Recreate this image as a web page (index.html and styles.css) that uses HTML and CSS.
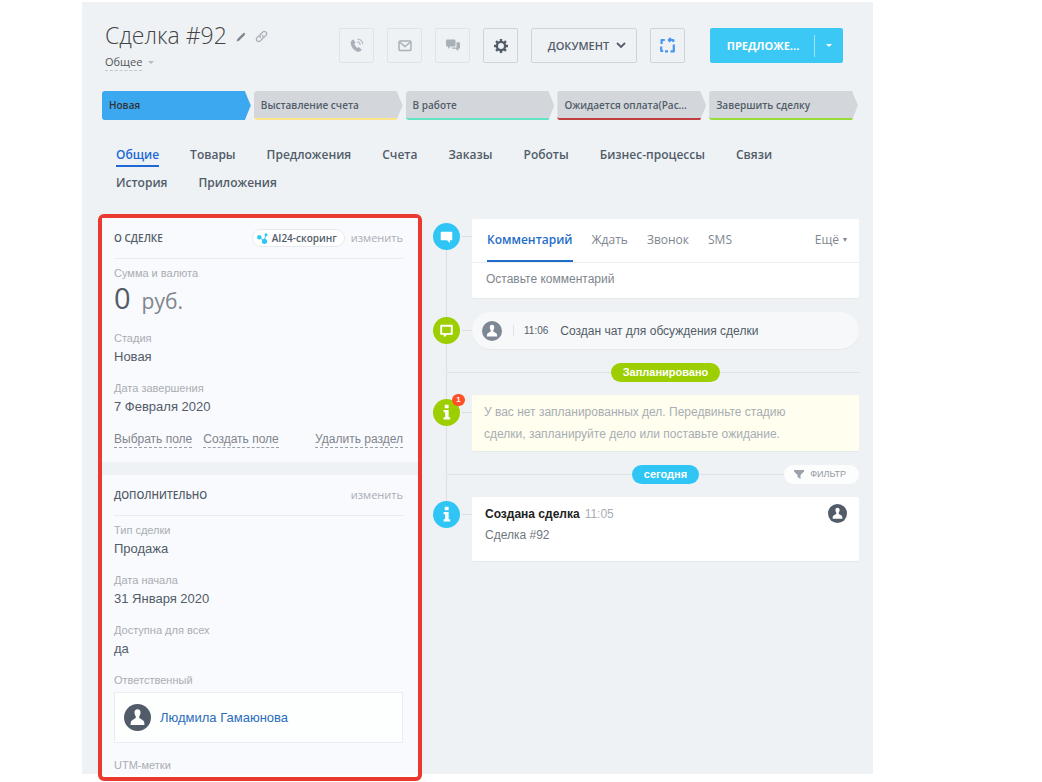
FILE: index.html
```html
<!DOCTYPE html>
<html lang="ru">
<head>
<meta charset="utf-8">
<meta name="viewport" content="width=device-width, initial-scale=1">
<title>Сделка #92</title>
<link rel="stylesheet" href="styles.css">
</head>
<body>
<svg class="defs" aria-hidden="true">
  <symbol id="user" viewBox="0 0 26 26">
    <circle cx="13" cy="13" r="13" fill="currentColor"/>
    <path fill="#fff" d="M13 5c-2 0-3 1.400-2.900 3.300 0 1.500.5 2.700 1.200 3.500v1.800l-2.700 1.600c-1.500.8-2 1.600-2.100 2.700l-.2 2.300h13.400l-.2-2.300c-.1-1.100-.6-1.900-2.100-2.700l-2.700-1.600v-1.800c.7-.8 1.200-2 1.200-3.500C16 6.400 15 5 13 5z"/>
  </symbol>
  <symbol id="info" viewBox="0 0 28 28">
    <path fill="#fff" d="M12.200 6h4v3.500h-4zM11 11.300h5.200v7.500h1.600v2.500H11v-2.500h1.600v-5H11z"/>
  </symbol>
</svg>
<div class="app">
  <header class="header">
    <div class="heading">
      <div class="title-row">
        <h1 class="title">Сделка #92</h1>
        <svg class="pencil" viewBox="0 0 10 10" aria-hidden="true"><path fill="#7f8790" d="M.5 9.500l.8-2.500L6.800 1.500 8.500.8l.7.7-.7 1.700L3 8.700z"/></svg>
        <svg class="chain" viewBox="0 0 14 14" fill="none" stroke="#a9b0b8" stroke-width="1.400" stroke-linecap="round" aria-hidden="true"><path d="M6 8.200a2.600 2.600 0 0 1 0-3.600l2.300-2.300a2.400 2.400 0 0 1 3.500 3.500L10 7.600M8 5.800a2.600 2.600 0 0 1 0 3.600l-2.300 2.300a2.400 2.400 0 0 1-3.500-3.500L4 6.400"/></svg>
      </div>
      <button class="category" type="button"><span class="category-name">Общее</span><span class="caret"></span></button>
    </div>
    <div class="tools">
      <button class="tool faint" type="button" aria-label="Позвонить"><svg viewBox="0 0 16 16" width="16" height="16"><path fill="#a9b0b8" d="M3 2.200l1.500-.7 2 3.200-1.200 1.100c.5 1.600 1.600 3.100 3.100 4.100l1.400-.9 2.800 2.500-.9 1.600c-1 1-2.900 1-4.500.1-3-1.600-5-4.400-5.400-7.500-.2-1.500.1-2.800 1.200-3.500z"/><path fill="none" stroke="#b9c0c7" stroke-width="1.200" d="M8.200 3.800c1.700.1 2.900 1.300 3.100 3.100M8.600 1.200c2.900.2 4.900 2.200 5.200 5.200"/></svg></button>
      <button class="tool faint" type="button" aria-label="Письмо"><svg viewBox="0 0 14 12" width="14" height="12" fill="none" stroke="#a9b0b8" stroke-width="1.500"><rect x="1" y="1" width="12" height="9.500" rx="1.200"/><path d="M1.500 2l5.500 4.500L12.500 2"/></svg></button>
      <button class="tool faint" type="button" aria-label="Чат"><svg viewBox="0 0 14 13" width="14" height="13" fill="#a9b0b8"><path d="M1 .5h7.500a1 1 0 0 1 1 1v5a1 1 0 0 1-1 1H4.500L2.200 10V7.500H1a1 1 0 0 1-1-1v-5a1 1 0 0 1 1-1z"/><path d="M10.500 3.200H13a1 1 0 0 1 1 1v4.600a1 1 0 0 1-1 1h-.8v2.400l-2.500-2.400H6.500a1 1 0 0 1-.9-1.200h4.900z"/></svg></button>
      <button class="tool" type="button" aria-label="Настройки"><svg viewBox="0 0 14 14" width="14" height="14"><circle cx="7" cy="7" r="4.100" fill="none" stroke="#525c69" stroke-width="2.300"/><path stroke="#525c69" stroke-width="2.400" d="M7 0v2.500M7 11.500V14M0 7h2.500M11.500 7H14M2.050 2.050L3.800 3.800M10.200 10.200l1.750 1.750M2.050 11.950L3.800 10.200M10.200 3.800l1.750-1.750"/></svg></button>
      <button class="tool document" type="button">ДОКУМЕНТ<svg viewBox="0 0 10 7" width="10" height="7" fill="none" stroke="#525c69" stroke-width="1.800"><path d="M1 1l4 4 4-4"/></svg></button>
      <button class="tool" type="button" aria-label="Приложение"><svg viewBox="0 0 17 17" width="17" height="17" fill="none" stroke="#4a96f0" stroke-width="2.200" stroke-linejoin="round"><path d="M5.800 3H2.600v4M2.200 9.500v4.500h2M6 14.400h3M9.800 3h4.500v2M11.800 1L9.800 3l1.600 1.800M11.500 14.400h3.300V7.500"/></svg></button>
      <div class="offer">
        <button class="offer-main" type="button">ПРЕДЛОЖЕ...</button>
        <button class="offer-more" type="button" aria-label="Ещё"><span class="caret"></span></button>
      </div>
    </div>
  </header>

  <div class="stages">
    <button class="stage current" type="button">Новая</button>
    <button class="stage yellow" type="button">Выставление счета</button>
    <button class="stage teal" type="button">В работе</button>
    <button class="stage red" type="button">Ожидается оплата(Рас...</button>
    <button class="stage green" type="button">Завершить сделку</button>
  </div>

  <nav class="tabs">
    <a class="tab active" href="#">Общие</a>
    <a class="tab" href="#">Товары</a>
    <a class="tab" href="#">Предложения</a>
    <a class="tab" href="#">Счета</a>
    <a class="tab" href="#">Заказы</a>
    <a class="tab" href="#">Роботы</a>
    <a class="tab" href="#">Бизнес-процессы</a>
    <a class="tab" href="#">Связи</a>
    <a class="tab" href="#">История</a>
    <a class="tab" href="#">Приложения</a>
  </nav>

  <main class="columns">
    <div class="details">
      <section class="section">
        <div class="section-head">
          <h2 class="section-title">О СДЕЛКЕ</h2>
          <button class="scoring" type="button"><svg viewBox="0 0 11 11" width="11" height="11" fill="#2fc6f6"><path stroke="#2fc6f6" d="M2.500 4.500l5 4M7 8l2-6"/><circle cx="2.300" cy="4.200" r="2.200"/><circle cx="7.500" cy="8.300" r="2.600"/><circle cx="9" cy="1.700" r="1.500"/></svg>AI24-скоринг</button>
          <button class="edit" type="button">изменить</button>
        </div>
        <dl class="fields">
          <div class="field sum"><dt>Сумма и валюта</dt><dd><span class="amount">0</span><span class="currency">руб.</span></dd></div>
          <div class="field"><dt>Стадия</dt><dd>Новая</dd></div>
          <div class="field"><dt>Дата завершения</dt><dd>7 Февраля 2020</dd></div>
        </dl>
        <div class="actions">
          <a class="action" href="#">Выбрать поле</a>
          <a class="action" href="#">Создать поле</a>
          <a class="action last" href="#">Удалить раздел</a>
        </div>
      </section>
      <section class="section">
        <div class="section-head">
          <h2 class="section-title">ДОПОЛНИТЕЛЬНО</h2>
          <button class="edit" type="button">изменить</button>
        </div>
        <dl class="fields">
          <div class="field"><dt>Тип сделки</dt><dd>Продажа</dd></div>
          <div class="field"><dt>Дата начала</dt><dd>31 Января 2020</dd></div>
          <div class="field"><dt>Доступна для всех</dt><dd>да</dd></div>
          <div class="field person"><dt>Ответственный</dt><dd><svg class="avatar" aria-hidden="true"><use href="#user"/></svg><a href="#">Людмила Гамаюнова</a></dd></div>
          <div class="field"><dt>UTM-метки</dt></div>
        </dl>
      </section>
    </div>

    <div class="timeline">
      <div class="event">
        <span class="dot blue"><svg viewBox="0 0 28 28"><path fill="#fff" d="M9 9h10a1 1 0 0 1 1 1v7a1 1 0 0 1-1 1h-1.500v2.800L14.500 18H9a1 1 0 0 1-1-1v-7a1 1 0 0 1 1-1z"/></svg></span>
        <div class="card composer">
          <div class="modes">
            <button class="mode active" type="button">Комментарий</button>
            <button class="mode" type="button">Ждать</button>
            <button class="mode" type="button">Звонок</button>
            <button class="mode" type="button">SMS</button>
            <button class="mode more" type="button">Ещё<span class="caret"></span></button>
          </div>
          <input class="comment" type="text" placeholder="Оставьте комментарий" aria-label="Комментарий">
        </div>
      </div>
      <div class="event">
        <span class="dot lime middle"><svg viewBox="0 0 28 28"><path fill="none" stroke="#fff" stroke-width="2" stroke-linejoin="round" d="M8.500 9h11v8.500H14l-2 2v-2H8.500z"/></svg></span>
        <div class="log">
          <svg class="log-avatar" aria-hidden="true"><use href="#user"/></svg>
          <time class="log-time">11:06</time>
          <span>Создан чат для обсуждения сделки</span>
        </div>
      </div>
      <div class="divider"><span class="pill lime">Запланировано</span></div>
      <div class="event">
        <span class="dot lime"><svg><use href="#info"/></svg><span class="badge">1</span></span>
        <p class="card notice">У вас нет запланированных дел. Передвиньте стадию сделки, запланируйте дело или поставьте ожидание.</p>
      </div>
      <div class="divider"><span class="pill blue">сегодня</span><button class="filter" type="button"><svg viewBox="0 0 10 9" width="10" height="9" fill="#9aa2ac"><path d="M0 0h10v1.500L6.500 5v4L3.500 7V5L0 1.500z"/></svg>ФИЛЬТР</button></div>
      <div class="event">
        <span class="dot blue"><svg><use href="#info"/></svg></span>
        <article class="card created">
          <div><strong>Создана сделка</strong><time>11:05</time><p>Сделка #92</p></div>
          <svg class="log-avatar dark" aria-hidden="true"><use href="#user"/></svg>
        </article>
      </div>
    </div>
  </main>
</div>
</body>
</html>
```
FILE: styles.css
```css
* {
  box-sizing: border-box;
}

body {
  margin: 0;
  padding: 2px 169px 8px 82px;
  background: #fff;
  color: #525c69;
  font-family: "Liberation Sans", Arial, sans-serif;
  font-size: 13px;
}

button {
  margin: 0;
  padding: 0;
  border: 0;
  background: none;
  color: inherit;
  font: inherit;
  cursor: pointer;
}

a {
  color: inherit;
  text-decoration: none;
}

h1, h2, p, dl, dd {
  margin: 0;
}

svg {
  display: block;
}

.defs {
  position: absolute;
  width: 0;
  height: 0;
}

.app {
  padding: 21px 14px 0 16px;
  background: #eef2f5;
}

.caret {
  width: 0;
  height: 0;
  border: 3px solid transparent;
  border-top-color: currentColor;
  border-bottom: 0;
}

/* Header */
.header {
  display: flex;
  justify-content: space-between;
  padding: 0 16px 0 7px;
}

.title-row {
  display: flex;
  align-items: center;
  gap: 9px;
}

.title {
  color: #444;
  font: 300 23px/24px "Open Sans", sans-serif;
}

.pencil {
  width: 10px;
  height: 10px;
  margin-top: 3px;
}

.chain {
  width: 13px;
  height: 13px;
  margin-top: 3px;
}

.category {
  display: flex;
  align-items: center;
  gap: 6px;
  margin-top: 6px;
  color: #555;
  font: 500 11px/17px "Open Sans", sans-serif;
}

.category-name {
  border-bottom: 1px dashed #c3c8cd;
}

.category .caret {
  color: #b5bbc2;
}

.tools {
  display: flex;
  gap: 13px;
  padding-top: 5px;
}

.tool {
  display: flex;
  align-items: center;
  justify-content: center;
  gap: 7px;
  width: 35px;
  height: 35px;
  border: 1px solid #cdd5da;
  border-radius: 2px;
}

.tool.faint {
  border-color: #e0e4ea;
}

.tool.document {
  width: 106px;
  padding-left: 6px;
  font: 600 11px/16px "Open Sans", sans-serif;
}

.offer {
  display: flex;
  align-items: center;
  width: 133px;
  height: 35px;
  margin-left: 12px;
  border-radius: 2px;
  background: #3bc8f5;
  color: #fff;
}

.offer-main {
  flex: 1;
  height: 22px;
  padding-left: 2px;
  border-right: 1px solid #9ee3fa;
  font: 700 11px/22px "Open Sans", sans-serif;
}

.offer-more {
  display: flex;
  align-items: center;
  justify-content: center;
  width: 28px;
  height: 35px;
}

/* Stages */
.stages {
  display: flex;
  gap: 3px;
  margin-top: 20px;
  padding: 0 1px 0 4px;
}

.stage {
  flex: 1 1 0;
  min-width: 0;
  height: 29px;
  padding: 1px 7px 0;
  border-bottom: 2px solid #d3d7dc;
  border-radius: 3px;
  background: #d3d7dc;
  clip-path: polygon(0 0, calc(100% - 6px) 0, 100% 50%, calc(100% - 6px) 100%, 0 100%);
  overflow: hidden;
  font: 600 10px/26px "Open Sans", sans-serif;
  text-align: left;
  white-space: nowrap;
}

.stage.current {
  border-color: #3ba8ef;
  background: #3ba8ef;
  color: #333;
}

.stage.yellow { border-color: #fbe58c; }
.stage.teal { border-color: #63e3c3; }
.stage.red { border-color: #bf3f40; }
.stage.green { border-color: #98dc3c; }

/* Section tabs */
.tabs {
  display: flex;
  flex-wrap: wrap;
  gap: 5px 31px;
  margin-top: 24px;
  padding: 0 16px 0 18px;
}

.tab {
  border-bottom: 2px solid transparent;
  font: 600 12px/21px "Open Sans", sans-serif;
}

.tab.active {
  border-color: #2067d8;
  color: #2067d8;
}

/* Two columns */
.columns {
  display: grid;
  grid-template-columns: minmax(0, 324fr) minmax(0, 426fr);
  gap: 11px;
  align-items: start;
  margin-top: 19px;
}

.details {
  margin-bottom: -7px;
  padding-bottom: 3px;
  border: 4px solid #ea3a2f;
  border-radius: 6px;
  background: #fff;
}

.section {
  padding: 0 15px 0 12px;
  background: #f9fafd;
}

.section + .section {
  border-top: 13px solid #eef2f5;
}

.section-head {
  display: flex;
  align-items: center;
  gap: 6px;
  height: 41px;
  border-bottom: 1px solid #e5edf3;
}

.section-title {
  flex: 1;
  font: 600 10px/16px "Open Sans", sans-serif;
}

.scoring {
  display: flex;
  align-items: center;
  gap: 4px;
  height: 18px;
  padding: 0 7px 0 4px;
  border: 1px solid #e6eaee;
  border-radius: 9px;
  background: #fff;
  font: 600 10px/16px "Open Sans", sans-serif;
}

.edit {
  color: #a8adb4;
  font: 11px/16px "Open Sans", sans-serif;
}

.fields {
  display: grid;
  gap: 13px;
  padding-top: 6px;
}

.field dt {
  color: #a8adb4;
  font-size: 11px;
  line-height: 17px;
}

.field dd {
  font-size: 13px;
  line-height: 20px;
}

.sum dd {
  display: flex;
  align-items: baseline;
  gap: 11px;
  line-height: 32px;
  font-family: "Open Sans", sans-serif;
}

.amount {
  font-size: 29px;
}

.currency {
  color: #80868e;
  font-size: 21px;
}

.person {
  padding-bottom: 1px;
}

.person dd {
  display: flex;
  align-items: center;
  gap: 9px;
  height: 51px;
  margin-top: 3px;
  padding-left: 9px;
  border: 1px solid #e9edf2;
  background: #fdfefe;
  color: #2a6dbb;
}

.avatar {
  width: 27px;
  height: 27px;
  color: #525c69;
}

.actions {
  display: flex;
  gap: 11px;
  padding: 15px 0 14px;
  color: #7f858e;
  font-size: 12px;
  line-height: 15px;
}

.action {
  border-bottom: 1px dashed #9aa0a8;
}

.action.last {
  margin-left: auto;
}

/* Timeline */
.timeline {
  position: relative;
  display: grid;
  padding-top: 5px;
}

.timeline::before {
  position: absolute;
  top: 20px;
  bottom: 50px;
  left: 13px;
  width: 1px;
  background: #dadfe3;
  content: "";
}

.event {
  position: relative;
  display: grid;
  grid-template-columns: 27px minmax(0, 1fr);
  gap: 12px;
  align-items: start;
}

.dot {
  position: relative;
  width: 27px;
  height: 27px;
  margin-top: 4px;
  border-radius: 50%;
}

.dot svg {
  width: 27px;
  height: 27px;
}

.dot::after {
  position: absolute;
  top: 13px;
  left: 29px;
  width: 10px;
  height: 1px;
  background: #dadfe3;
  content: "";
}

.blue { background: #2fc6f6; }
.lime { background: #9dcf00; }

.badge {
  position: absolute;
  top: -5px;
  right: -5px;
  width: 13px;
  height: 12px;
  border-radius: 6px;
  background: #ff5028;
  color: #fff;
  font-size: 8px;
  font-weight: 700;
  line-height: 12px;
  text-align: center;
}

.card {
  border-radius: 2px;
  background: #fff;
  box-shadow: 0 1px 0 #e4e9ec;
}

.modes {
  display: flex;
  gap: 19px;
  padding: 0 12px 0 15px;
  border-bottom: 1px solid #eceff1;
}

.mode {
  height: 43px;
  border-bottom: 2px solid transparent;
  color: #80868e;
  font: 500 12px/41px "Open Sans", sans-serif;
}

.mode.active {
  border-color: #1f6dc8;
  color: #1f6dc8;
  font-weight: 600;
}

.mode.more {
  display: flex;
  align-items: center;
  gap: 4px;
  margin-left: auto;
}

.mode.more .caret {
  border-width: 4px 2px 0;
}

.comment {
  display: block;
  width: 100%;
  height: 35px;
  padding: 0 14px 4px;
  border: 0;
  background: none;
  color: #525c69;
  font: 12px/16px "Liberation Sans", Arial, sans-serif;
}

.comment::placeholder {
  color: #80868e;
}

.log {
  display: flex;
  align-items: center;
  height: 37px;
  margin-top: 14px;
  padding-left: 10px;
  border-radius: 19px;
  background: #f6f8f9;
  box-shadow: 0 1px 0 #e4e9ec;
  font-size: 12px;
}

.dot.middle {
  align-self: center;
  margin-top: 14px;
}

.log-avatar {
  width: 20px;
  height: 20px;
  color: #7d8894;
}

.log-avatar.dark {
  width: 19px;
  height: 19px;
  color: #525c69;
}

.log-time {
  margin: 0 12px 0 11px;
  padding-left: 10px;
  border-left: 1px solid #e0e4e8;
  font-size: 10px;
}

.divider {
  position: relative;
  display: flex;
  align-items: center;
  justify-content: center;
  height: 46px;
  padding-left: 39px;
}

.divider::before {
  position: absolute;
  top: 23px;
  right: 0;
  left: 13px;
  height: 1px;
  background: #dfe3e7;
  content: "";
}

.pill {
  position: relative;
  padding: 0 12px;
  border-radius: 10px;
  color: #fff;
  font-size: 11px;
  font-weight: 700;
  line-height: 19px;
}

.filter {
  position: absolute;
  right: 0;
  display: flex;
  align-items: center;
  gap: 6px;
  height: 19px;
  padding: 0 13px 0 10px;
  border-radius: 10px;
  background: #fcfdfd;
  color: #949aa2;
  font-size: 9px;
}

.notice {
  padding: 6px 70px 6px 12px;
  background: #fffeef;
  color: #a8adb4;
  font-size: 12px;
  line-height: 22px;
}

.created {
  display: flex;
  justify-content: space-between;
  min-height: 64px;
  padding: 7px 12px 8px 13px;
  color: #71777f;
  font-size: 12px;
  line-height: 21px;
}

.created strong {
  color: #222;
}

.created time {
  margin-left: 5px;
  color: #a8adb4;
}
```
